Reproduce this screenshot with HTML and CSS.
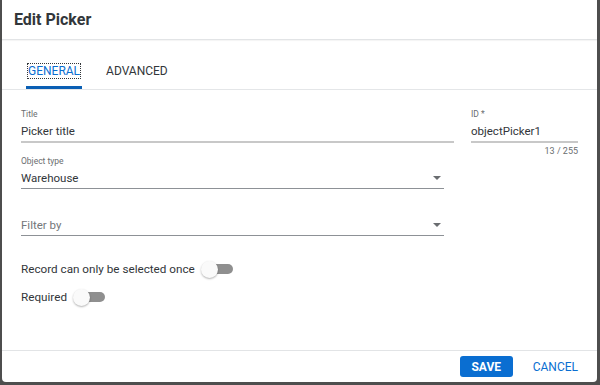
FILE: index.html
```html
<!DOCTYPE html>
<html lang="en">
<head>
    <meta charset="UTF-8">
    <meta name="viewport" content="width=device-width, initial-scale=1.0">
    <title>Edit Picker</title>
    <link rel="stylesheet" href="styles.css">
</head>
<body>
    <div class="dialog">
        <div class="dialog-header">Edit Picker</div>

        <div class="tabs">
            <div class="tab active"><span class="tab-label">GENERAL</span></div>
            <div class="tab"><span class="tab-label">ADVANCED</span></div>
        </div>

        <div class="form">
            <div class="row">
                <div class="field field-title">
                    <div class="label">Title</div>
                    <div class="value">Picker title</div>
                </div>
                <div class="field field-id">
                    <div class="label">ID *</div>
                    <div class="value">objectPicker1</div>
                    <div class="counter">13 / 255</div>
                </div>
            </div>

            <div class="field select first-select">
                <div class="label">Object type</div>
                <div class="value">Warehouse <span class="arrow"></span></div>
            </div>

            <div class="field select second-select">
                <div class="label"></div>
                <div class="value placeholder">Filter by <span class="arrow"></span></div>
            </div>

            <div class="switch-row first-switch">
                <span>Record can only be selected once</span>
                <span class="switch"><span class="thumb"></span></span>
            </div>
            <div class="switch-row">
                <span>Required</span>
                <span class="switch"><span class="thumb"></span></span>
            </div>
        </div>

        <div class="dialog-footer">
            <button class="btn btn-primary">SAVE</button>
            <button class="btn btn-text">CANCEL</button>
        </div>
    </div>
</body>
</html>
```

FILE: styles.css
```css
html, body {
    margin: 0;
    height: 100%;
}
body {
    background-color: #4e4e4e;
    font-family: Roboto, "Liberation Sans", Arial, sans-serif;
    color: #32363a;
    padding: 0 3px 3px 2px;
    box-sizing: border-box;
}
.dialog {
    background-color: #fff;
    height: 382px;
    border-radius: 0 0 4px 4px;
    display: flex;
    flex-direction: column;
}
.dialog-header {
    height: 39px;
    line-height: 39px;
    padding-left: 12px;
    font-size: 16px;
    font-weight: bold;
    border-bottom: 1px solid #e2e4e6;
    box-shadow: 0 1px 1px rgba(0, 0, 0, 0.04);
}
.tabs {
    display: flex;
    height: 49px;
    padding-left: 24px;
    border-bottom: 1px solid #e4e6e8;
}
.tab {
    display: flex;
    align-items: center;
    padding: 16px 2px 0 2px;
    margin-right: 22px;
    font-size: 12px;
    border-bottom: 3px solid transparent;
}
.tab.active {
    border-bottom-color: #0a5fb4;
    color: #0a6ed1;
}
.tab.active .tab-label {
    outline: 1px dotted #32363a;
}
.form {
    flex: 1;
    padding: 17px 19px 0 19px;
}
.row {
    display: flex;
    gap: 17px;
}
.field .label {
    font-size: 8.5px;
    line-height: 14px;
    height: 14px;
    color: #6a6d70;
}
.field .value {
    font-size: 11.5px;
    line-height: 20px;
    display: flex;
    align-items: center;
    justify-content: space-between;
}
.field-title {
    width: 433px;
}
.field-title .value,
.field-id .value {
    border-bottom: 2px solid #c8c8c8;
}
.field-id {
    width: 107px;
}
.counter {
    font-size: 9px;
    line-height: 12px;
    text-align: right;
    color: #6a6d70;
    margin-top: 2px;
    margin-bottom: -14px;
}
.select {
    width: 423px;
}
.select .value {
    border-bottom: 1px solid #8d9196;
}
.first-select {
    margin-top: 11px;
}
.second-select {
    margin-top: 12px;
}
.placeholder {
    color: #74777a;
}
.arrow {
    width: 0;
    height: 0;
    margin-right: 3px;
    border-left: 4px solid transparent;
    border-right: 4px solid transparent;
    border-top: 4px solid #6a6d70;
}
.switch-row {
    display: flex;
    align-items: center;
    gap: 6px;
    height: 28px;
    font-size: 11.7px;
}
.first-switch {
    margin-top: 19px;
}
.switch {
    position: relative;
    width: 32px;
    height: 17px;
    display: flex;
    align-items: center;
}
.switch::before {
    content: "";
    display: block;
    margin-left: 7px;
    width: 25px;
    height: 10px;
    border-radius: 5px;
    background-color: #8f8f8f;
}
.thumb {
    position: absolute;
    left: 0;
    top: 0;
    width: 17px;
    height: 17px;
    border-radius: 50%;
    background-color: #fafafa;
    box-shadow: 0 1px 2px rgba(0, 0, 0, 0.3);
}
.dialog-footer {
    height: 31px;
    border-top: 1px solid #e2e4e6;
    display: flex;
    align-items: center;
    justify-content: flex-end;
    padding-right: 19px;
    gap: 20px;
}
.btn {
    font-family: inherit;
    font-size: 12px;
    border: none;
    cursor: pointer;
    padding: 0;
}
.btn-primary {
    width: 53px;
    height: 21px;
    border-radius: 3px;
    background-color: #0a6ed1;
    color: #fff;
    font-weight: bold;
}
.btn-text {
    background: none;
    color: #0a6ed1;
    height: 21px;
}
```
